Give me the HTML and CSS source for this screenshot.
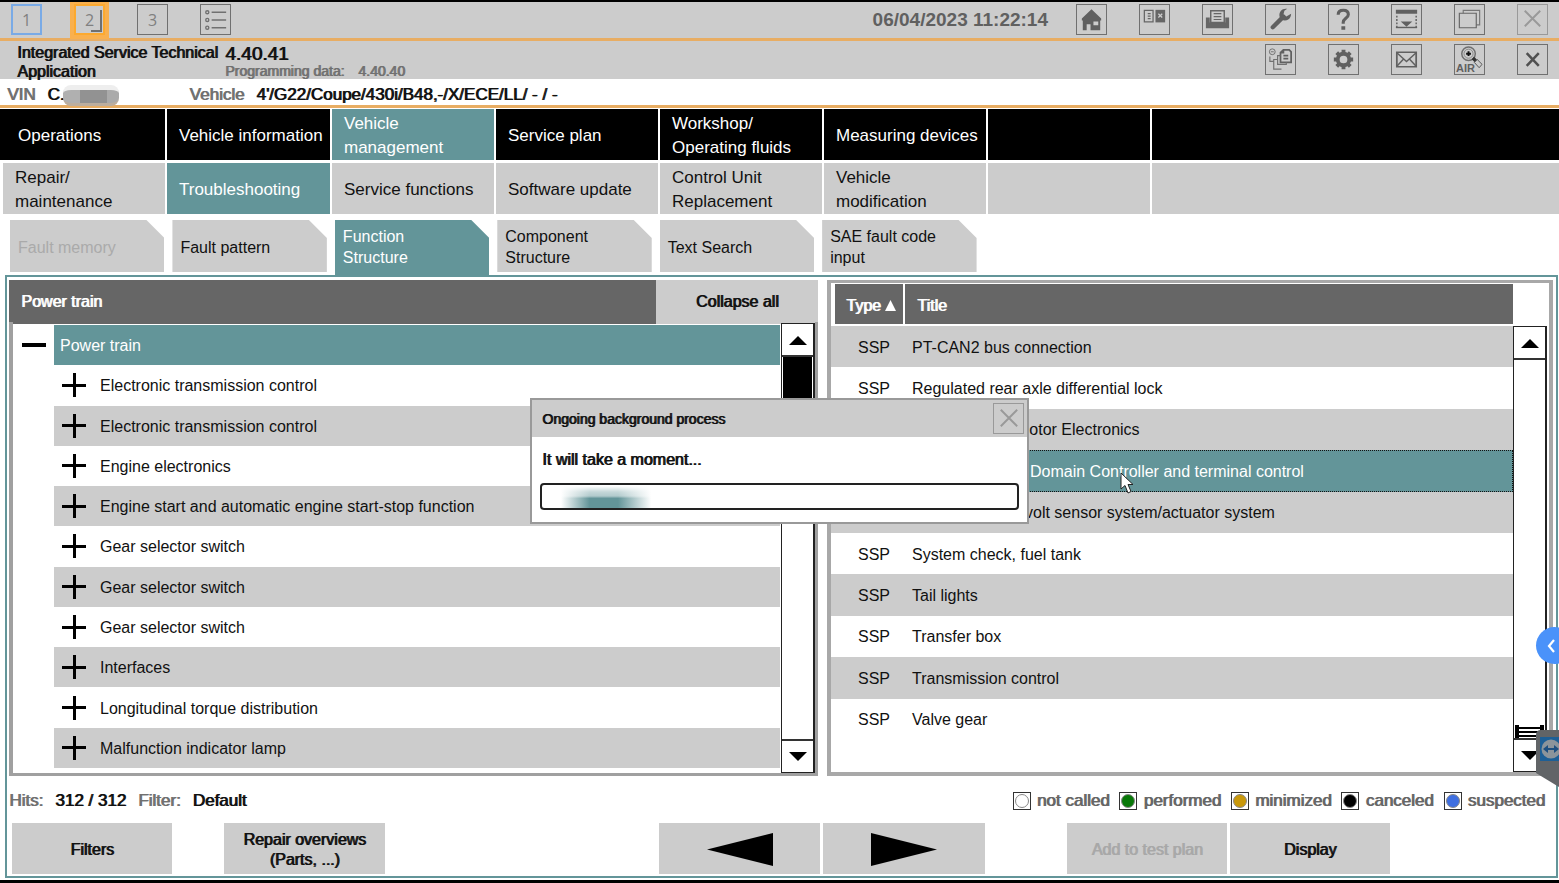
FILE: index.html
```html
<!DOCTYPE html>
<html lang="en">
<head>
<meta charset="utf-8">
<title>Integrated Service Technical Application</title>
<link rel="stylesheet" href="styles.css">
</head>
<body>
<div class="app">
  <header class="bar bar-top">
    <div class="slots">
      <button class="tool slot-blue" type="button">1</button>
      <button class="tool slot-active" type="button">2</button>
      <button class="tool" type="button">3</button>
      <button class="tool" type="button" aria-label="List"><svg viewBox="0 0 30 30" fill="none" stroke="#707070" stroke-width="1.4"><circle cx="6.500" cy="7.500" r="1.600"/><circle cx="6.500" cy="15.500" r="1.600"/><circle cx="6.500" cy="23.500" r="1.600"/><path d="M11 7.500h15M11 15.500h15M11 23.500h15"/></svg></button>
    </div>
    <div class="tools">
      <time class="clock" datetime="2023-04-06T11:22:14">06/04/2023 11:22:14</time>
      <button class="tool" type="button" aria-label="Home"><svg viewBox="0 0 30 30"><path fill="#606060" fill-rule="evenodd" d="M15 4.500 25 14v2h-1v10H14v-6h-4v6H6V16H5v-2zM17 17h5v4h-5z"/></svg></button>
      <button class="tool" type="button" aria-label="Split view"><svg viewBox="0 0 30 30"><path fill="none" stroke="#666" stroke-width="1.300" d="M4.500 5.500h9v12h-9zM8 9h3M8 11.500h3M8 14h3"/><path fill="#666" d="M16 5h10v13H16z"/><path stroke="#ccc" stroke-width="1.300" d="m19 9 4 4m0-4-4 4"/></svg></button>
      <button class="tool" type="button" aria-label="Print"><svg viewBox="0 0 30 30"><path fill="#666" d="M3 13h4v5h16v-5h4v11H3z"/><path fill="#ccc" stroke="#666" stroke-width="1.500" d="M8 18V6h14v12z"/><path stroke="#666" stroke-width="1.200" d="M11 9h8M11 12h8M11 15h8"/></svg></button>
      <button class="tool" type="button" aria-label="Service tools"><svg viewBox="0 0 30 30"><path stroke="#606060" stroke-width="4.500" stroke-linecap="round" d="M7 23 18 12"/><path fill="#606060" d="M22 4c-5-1-9 3-8 8 1 4 6 5 9 3 2-1 3-4 3-6l-5 3-3-2 1-4z"/></svg></button>
      <button class="tool" type="button" aria-label="Help"><svg viewBox="0 0 30 30"><path fill="none" stroke="#606060" stroke-width="3.200" d="M9.500 10c0-3 2-4.600 5.300-4.600 3.200 0 5.200 1.600 5.200 4.300 0 4-5.300 4-5.300 8.300v1.500"/><path fill="#606060" d="M12.800 22h4v3.500h-4z"/></svg></button>
      <button class="tool" type="button" aria-label="Minimize"><svg viewBox="0 0 30 30"><path fill="#606060" d="M4 5h22v4H4zM9 17h12l-6 5.500z"/><path fill="none" stroke="#606060" stroke-width="1.500" stroke-dasharray="2 1.500" d="M5 11v12M25 11v12"/><path fill="#606060" d="M4 22.500h22V24H4z"/></svg></button>
      <button class="tool" type="button" aria-label="Windows"><svg viewBox="0 0 30 30"><path fill="#ccc" stroke="#777" stroke-width="1.200" d="M8.500 5.500h17v15h-17z"/><path fill="#ccc" stroke="#666" stroke-width="1.200" d="M4.500 8.500h17.500v15H4.500z"/></svg></button>
      <button class="tool faded" type="button" aria-label="Close session" disabled><svg viewBox="0 0 30 30"><path stroke="#999" stroke-width="2" d="m7 6 16 16M23 6 7 22"/></svg></button>
    </div>
  </header>

  <header class="bar bar-app">
    <h1 class="app-name strong">Integrated Service Technical Application</h1>
    <div class="version strong">
      <span class="version-main">4.40.41</span>
      <span class="version-data">Programming data: <span class="version-num">4.40.40</span></span>
    </div>
    <div class="tools">
      <button class="tool" type="button" aria-label="Process list"><svg viewBox="0 0 30 30" fill="none" stroke="#707070"><circle cx="6.500" cy="7" r="3"/><path d="M5 7h3"/><path stroke="#606060" stroke-width="1.800" d="M18 5h6l2 2v11H15V8zM18 5v3h-3M18 11h5M18 14h5"/><path stroke-width="1.200" d="M15 11h-3v9h9v-2M12 15H8v10h8M4 12v5h4"/></svg></button>
      <button class="tool" type="button" aria-label="Settings"><svg viewBox="0 0 30 30"><g stroke="#606060" stroke-width="4"><path d="M15 5v20M5 15h20M8 8l14 14M22 8 8 22"/></g><circle cx="15" cy="15" r="6" fill="#ccc" stroke="#606060" stroke-width="4"/></svg></button>
      <button class="tool" type="button" aria-label="Messages"><svg viewBox="0 0 30 30" fill="none" stroke="#606060" stroke-width="1.800"><path d="M5 7.500h20v15H5z"/><path stroke-width="1.500" d="m5 8 10 9 10-9M5 22l7-7.500M25 22l-7-7.500"/></svg></button>
      <button class="tool tool-air" type="button"><svg viewBox="0 0 30 30" fill="none"><circle cx="14" cy="9" r="7" stroke="#707070" stroke-width="1.500"/><circle cx="14" cy="9" r="4.700" stroke="#888"/><path stroke="#111" stroke-width="2" d="M14 6.500v5M11.500 9h5"/><path stroke="#333" stroke-width="3.500" d="m18.500 13.500 4 4"/><path fill="#ccc" stroke="#555" d="m20 18 3-3 5 5-3 3.500z"/></svg><span>AIR</span></button>
      <button class="tool" type="button" aria-label="Close"><svg viewBox="0 0 30 30"><path stroke="#505050" stroke-width="2.600" d="m9 8.500 12.500 13M21.500 8.500 9 21.500"/></svg></button>
    </div>
  </header>

  <div class="vehicle-line strong">
    <span class="label">VIN</span>
    <span class="vin">C.<span class="redaction"></span></span>
    <span class="label">Vehicle</span>
    <span>4'/G22/Coupe/430i/B48,-/X/ECE/LL/ - / -</span>
  </div>

  <nav class="nav nav-main" aria-label="Main">
    <button type="button">Operations</button>
    <button type="button">Vehicle information</button>
    <button type="button" class="current">Vehicle<br>management</button>
    <button type="button">Service plan</button>
    <button type="button">Workshop/<br>Operating fluids</button>
    <button type="button">Measuring devices</button>
    <span></span><span></span>
  </nav>
  <nav class="nav nav-sub" aria-label="Vehicle management">
    <button type="button">Repair/<br>maintenance</button>
    <button type="button" class="current">Troubleshooting</button>
    <button type="button">Service functions</button>
    <button type="button">Software update</button>
    <button type="button">Control Unit<br>Replacement</button>
    <button type="button">Vehicle<br>modification</button>
    <span></span><span></span>
  </nav>
  <nav class="tabs" aria-label="Troubleshooting">
    <button type="button" disabled>Fault memory</button>
    <button type="button">Fault pattern</button>
    <button type="button" class="current">Function<br>Structure</button>
    <button type="button">Component<br>Structure</button>
    <button type="button">Text Search</button>
    <button type="button">SAE fault code<br>input</button>
  </nav>

  <main class="frame">
    <div class="panels">
      <section class="panel-tree">
        <div class="tree-head strong">
          <h2>Power train</h2>
          <button type="button">Collapse all</button>
        </div>
        <div class="tree-body">
          <ul class="tree">
            <li class="root"><button type="button" class="twist minus" aria-label="Collapse"></button><span>Power train</span></li>
            <li><button type="button" class="twist" aria-label="Expand"></button><span>Electronic transmission control</span></li>
            <li><button type="button" class="twist" aria-label="Expand"></button><span>Electronic transmission control</span></li>
            <li><button type="button" class="twist" aria-label="Expand"></button><span>Engine electronics</span></li>
            <li><button type="button" class="twist" aria-label="Expand"></button><span>Engine start and automatic engine start-stop function</span></li>
            <li><button type="button" class="twist" aria-label="Expand"></button><span>Gear selector switch</span></li>
            <li><button type="button" class="twist" aria-label="Expand"></button><span>Gear selector switch</span></li>
            <li><button type="button" class="twist" aria-label="Expand"></button><span>Gear selector switch</span></li>
            <li><button type="button" class="twist" aria-label="Expand"></button><span>Interfaces</span></li>
            <li><button type="button" class="twist" aria-label="Expand"></button><span>Longitudinal torque distribution</span></li>
            <li><button type="button" class="twist" aria-label="Expand"></button><span>Malfunction indicator lamp</span></li>
          </ul>
          <div class="scroll">
            <button type="button" aria-label="Scroll up"><svg viewBox="0 0 18 10"><path d="M0 10 9 1l9 9z"/></svg></button>
            <div class="track"><div class="thumb"></div></div>
            <button type="button" aria-label="Scroll down"><svg viewBox="0 0 18 10"><path d="M0 0h18L9 9z"/></svg></button>
          </div>
        </div>
      </section>

      <section class="panel-docs">
        <div class="docs">
          <table>
            <thead><tr class="strong"><th class="col-type" scope="col">Type <svg viewBox="0 0 10 10"><path d="M0 10 5 0l5 10z"/></svg></th><th scope="col">Title</th></tr></thead>
            <tbody>
              <tr><td>SSP</td><td>PT-CAN2 bus connection</td></tr>
              <tr><td>SSP</td><td>Regulated rear axle differential lock</td></tr>
              <tr><td>SSP</td><td class="in-motor">Motor Electronics</td></tr>
              <tr class="selected"><td>SSP</td><td class="in-domain">Domain Controller and terminal control</td></tr>
              <tr><td>SSP</td><td class="in-volt">volt sensor system/actuator system</td></tr>
              <tr><td>SSP</td><td>System check, fuel tank</td></tr>
              <tr><td>SSP</td><td>Tail lights</td></tr>
              <tr><td>SSP</td><td>Transfer box</td></tr>
              <tr><td>SSP</td><td>Transmission control</td></tr>
              <tr><td>SSP</td><td>Valve gear</td></tr>
            </tbody>
          </table>
        </div>
        <div class="scroll">
          <button type="button" aria-label="Scroll up"><svg viewBox="0 0 18 10"><path d="M0 10 9 1l9 9z"/></svg></button>
          <div class="track track-end"><div class="grip"></div></div>
          <button type="button" aria-label="Scroll down"><svg viewBox="0 0 18 10"><path d="M0 0h18L9 9z"/></svg></button>
        </div>
      </section>
    </div>

    <div class="status strong">
      <span class="label">Hits:</span><span>312 / 312</span>
      <span class="label">Filter:</span><span>Default</span>
      <ul class="legend">
        <li><i class="dot dot-open"></i>not called</li>
        <li><i class="dot dot-green"></i>performed</li>
        <li><i class="dot dot-amber"></i>minimized</li>
        <li><i class="dot dot-black"></i>canceled</li>
        <li><i class="dot dot-blue"></i>suspected</li>
      </ul>
    </div>

    <div class="actions strong">
      <button type="button" class="a-filters">Filters</button>
      <button type="button" class="a-repair">Repair overviews<br>(Parts, ...)</button>
      <button type="button" class="a-prev" aria-label="Previous"><svg viewBox="0 0 66 33"><path d="M66 0v33L0 16.500z"/></svg></button>
      <button type="button" class="a-next" aria-label="Next"><svg viewBox="0 0 66 33"><path d="M0 0v33l66-16.500z"/></svg></button>
      <button type="button" class="a-add" disabled>Add to test plan</button>
      <button type="button" class="a-display">Display</button>
    </div>
  </main>

  <section class="dialog" role="dialog" aria-labelledby="dlg-title">
    <div class="dialog-head">
      <h2 id="dlg-title" class="strong">Ongoing background process</h2>
      <button class="tool faded" type="button" aria-label="Close dialog" disabled><svg viewBox="0 0 30 30"><path stroke="#999" stroke-width="2" d="m7 6 17 17M24 6 7 23"/></svg></button>
    </div>
    <div class="dialog-body">
      <label for="dlg-progress" class="strong">It will take a moment...</label>
      <progress id="dlg-progress"></progress>
    </div>
  </section>

  <svg class="pointer" viewBox="0 0 14 22"><path d="M1 1v16l4-3.500 3 7.500 3-1.500-3-7h5z" fill="#fff" stroke="#222"/></svg>
  <button class="bubble" type="button" aria-label="Open side panel"><svg viewBox="0 0 8 14" fill="none" stroke="#fff" stroke-width="2.200"><path d="M7 1 2 7l5 6"/></svg></button>
  <svg class="remote" viewBox="0 0 23 57"><path fill="#616467" d="M0 5q0-5 5-5h18v57L0 43z"/><path fill="#1d5f96" d="M4 7h19v24H4z"/><circle cx="15" cy="19" r="9.500" fill="#8b949b"/><path fill="#1d4f80" d="m7 19 5-4v3h6v-3l5 4-5 4v-3h-6v3z"/></svg>
</div>
</body>
</html>
```
FILE: styles.css
```css
:root {
  --grey: #ccc;
  --teal: #639599;
  --dark: #666;
  --orange: #e8ad63;
}

* { box-sizing: border-box; }

body {
  margin: 0;
  background: #fff;
  color: #111;
  font: 16px/20px "Liberation Sans", Arial, sans-serif;
}

button {
  margin: 0;
  padding: 0;
  border: 0;
  border-radius: 0;
  color: inherit;
  font: inherit;
  text-shadow: inherit;
}

h1, h2, ul { margin: 0; padding: 0; }
h1, h2, th { font-weight: normal; font-size: 16px; }
ul { list-style: none; }

/* Emphasis drawn as a doubled stroke over the regular face */
.strong { text-shadow: 1px 0 currentColor; }

.app {
  position: relative;
  display: flex;
  flex-direction: column;
  min-height: 100vh;
  border-top: 2px solid #000;
  border-bottom: 3px solid #000;
  overflow: hidden;
}

/* Title bars */
.bar {
  display: flex;
  background: var(--grey);
  padding-right: 11px;
}
.bar-top {
  justify-content: space-between;
  height: 39px;
  padding-left: 11px;
  border-bottom: 3px solid var(--orange);
}
.bar-app { height: 38px; padding-left: 17px; }
.slots, .tools { display: flex; gap: 32px; padding-top: 2px; }
.bar-app .tools { margin-left: auto; padding-top: 3px; }

.tool {
  position: relative;
  display: block;
  flex: none;
  width: 31px;
  height: 31px;
  border: 1px solid #707070;
  background: var(--grey);
  color: #808080;
  font-size: 16px;
  font-family: "Open Sans", sans-serif;
}
.tool svg { display: block; width: 29px; height: 29px; }
.faded { border-color: #999; }
.slot-blue { border: 2px solid #79aae6; }
.slot-active {
  border: 2px solid #fca92f;
  outline: 4px solid #f9b04e;
}
.slot-active::after {
  content: "";
  position: absolute;
  right: 1px;
  bottom: 1px;
  width: 9px;
  height: 20px;
  border: solid #707070;
  border-width: 0 2px 2px 0;
}
.tool-air span {
  position: absolute;
  left: 1px;
  bottom: 0;
  color: #606060;
  font: bold 11px/12px "Liberation Sans", Arial, sans-serif;
}

.clock {
  margin-right: -4px;
  padding-top: 6px;
  color: #606060;
  font-weight: bold;
  font-size: 19px;
}

.app-name {
  width: 208px;
  padding-top: 2px;
  line-height: 19px;
}
.version { display: flex; flex-direction: column; padding-top: 4px; }
.version-main { font-size: 19px; line-height: 18px; }
.version-data { color: #707070; font-size: 14px; line-height: 16px; }
.version-num { margin-left: 10px; }

.vehicle-line {
  display: flex;
  align-items: center;
  gap: 12px;
  height: 29px;
  padding-left: 7px;
  padding-top: 6px;
  border-bottom: 3px solid var(--orange);
  font-size: 17px;
  white-space: pre;
}
.label { color: #707070; }
.vin { display: flex; align-items: center; width: 130px; }
.redaction {
  width: 56px;
  height: 21px;
  margin-left: -1px;
  border-radius: 8px;
  background: linear-gradient(90deg, #b0b0b0 30%, #929292 30% 78%, #aaa 78%);
  border-top: 5px solid #eee;
  border-bottom: 3px solid #bcae9f;
}

/* Navigation rows */
.nav {
  display: grid;
  grid-template-columns: 165fr 163fr repeat(5, 162fr) 407fr;
  gap: 2px;
  height: 51px;
  margin-top: 1px;
  font-size: 17px;
  line-height: 24px;
}
.nav > * {
  min-width: 0;
  padding-top: 2px;
  padding-left: 12px;
  background: var(--grey);
  text-align: left;
  white-space: nowrap;
}
.nav-main { color: #fff; }
.nav-main > * { background: #000; }
.nav-main > :first-child { padding-left: 18px; }
.nav-sub { grid-template-columns: 162fr 163fr repeat(5, 162fr) 407fr; margin: 3px 0 0 3px; }
.nav > .current, .tabs > .current { background: var(--teal); color: #fff; }

.tabs {
  display: grid;
  grid-template-columns: repeat(6, 1fr);
  gap: 8px;
  width: 62%;
  height: 55px;
  margin: 6px 0 0 10px;
  line-height: 21px;
}
.tabs > * {
  margin-bottom: 3px;
  padding: 2px 0 0 8px;
  background: var(--grey);
  text-align: left;
  clip-path: polygon(0 0, calc(100% - 18px) 0, 100% 18px, 100% 100%, 0 100%);
}
.tabs > .current { margin-bottom: 0; padding-bottom: 3px; }
.tabs > :disabled { color: #aaa; }

/* Work area */
.frame {
  flex: 1;
  display: flex;
  flex-direction: column;
  margin: 0 1px 2px 5px;
  padding: 3px 3px 2px 2px;
  border: 2px solid var(--teal);
}
.panels {
  flex: 1;
  display: grid;
  grid-template-columns: 809fr 726fr;
  gap: 9px;
}
.panel-tree, .panel-docs { min-width: 0; }

.panel-tree { display: flex; flex-direction: column; }
.tree-head {
  display: grid;
  grid-template-columns: 4fr 1fr;
  height: 42px;
  border-bottom: 1px solid #bbb;
}
.tree-head h2 {
  padding: 12px;
  background: var(--dark);
  color: #fff;
}
.tree-head button { background: var(--grey); }
.tree-body {
  flex: 1;
  display: flex;
  gap: 1px;
  padding-top: 1px;
  border: solid #a0a0a0;
  border-width: 0 3px 3px 4px;
}
.tree {
  flex: 1;
  display: grid;
  grid-auto-rows: 1fr;
  padding: 2px 0 5px 41px;
}
.tree li { display: flex; align-items: center; gap: 14px; padding-left: 8px; }
.tree span { padding-top: 2px; }
.tree li:nth-child(odd) { background: var(--grey); }
.tree .root:first-child { padding-left: 6px; background: var(--teal); color: #fff; }
.tree .root .twist { margin-left: -38px; }

.twist {
  flex: none;
  width: 24px;
  height: 24px;
  background:
    linear-gradient(#000, #000) center / 24px 3px no-repeat,
    linear-gradient(#000, #000) center / 3px 24px no-repeat;
}
.twist.minus { background: linear-gradient(#000, #000) center / 24px 4px no-repeat; }

.scroll {
  flex: none;
  display: flex;
  flex-direction: column;
  width: 34px;
  border: 1px solid #222;
  border-width: 1px 2px 1px 1px;
  background: #fff;
}
.scroll button { display: grid; place-items: center; height: 33px; background: #fff; }
.scroll button:first-child { border-bottom: 2px solid #333; }
.scroll button:last-child { border-top: 2px solid #333; }
.scroll svg { width: 18px; height: 10px; }
.track { flex: 1; display: flex; flex-direction: column; padding: 0 1px; }
.thumb { height: 20%; background: #000; }
.track-end { justify-content: flex-end; }
.grip {
  height: 13px;
  border: solid #000;
  border-width: 0 4px;
  background: repeating-linear-gradient(#fff 0 2px, #000 2px 4px);
}

.panel-docs {
  display: flex;
  border: 4px solid #a8a8a8;
  border-top-width: 3px;
}
.panel-docs .scroll { margin-top: 43px; margin-right: 2px; }
.docs { flex: 1; display: flex; padding-bottom: 32px; }
.docs table { width: 100%; border-spacing: 0; }
.docs th {
  height: 43px;
  padding: 4px 0 0 12px;
  border: solid #fff;
  border-width: 1px 0 2px 2px;
  background: var(--dark);
  color: #fff;
  text-align: left;
}
.docs th svg { width: 11px; height: 11px; fill: #fff; }
.docs th.col-type { width: 72px; padding-left: 11px; border-left-width: 4px; }
.docs td { padding: 2px 0 0 9px; white-space: nowrap; }
.docs td:first-child { padding-left: 27px; }
.docs tbody tr:nth-child(odd) { background: var(--grey); }
.docs tbody .selected { background: var(--teal); color: #fff; outline: 1px dotted #111; outline-offset: -1px; }
.docs td.in-motor { padding-left: 113px; }
.docs td.in-domain { padding-left: 127px; }
.docs td.in-volt { padding-left: 122px; }

/* Status and actions */
.status {
  display: flex;
  align-items: center;
  gap: 12px;
  height: 47px;
  padding: 3px 8px 0 0;
  font-size: 17px;
}
.legend { display: flex; gap: 10px; margin-left: auto; color: #666; }
.legend li { display: flex; align-items: center; gap: 6px; }
.dot {
  display: grid;
  place-items: center;
  width: 18px;
  height: 18px;
  border: 1px solid #333;
}
.dot::before { content: ""; width: 12px; height: 12px; border-radius: 50%; border: 1px solid #888; }
.dot-green::before { background: #087808; }
.dot-amber::before { background: #c9980a; }
.dot-black::before { background: #000; }
.dot-blue::before { background: #3f6fe0; }

.actions {
  display: grid;
  grid-template-columns: 3fr 160fr 52fr 161fr 274fr 161fr 3fr 162fr 82fr 160fr 3fr 160fr 163fr;
  height: 51px;
}
.actions button { min-width: 0; padding-top: 2px; background: var(--grey); white-space: nowrap; }
.actions svg { display: block; width: 66px; height: 33px; margin: 0 auto; }
.actions :disabled { color: #a8a8a8; }
.a-filters { grid-column: 2; }
.a-repair { grid-column: 4; }
.a-prev { grid-column: 6; }
.a-next { grid-column: 8; }
.a-add { grid-column: 10; }
.a-display { grid-column: 12; }

/* Floating layers */
.dialog {
  position: absolute;
  top: 396px;
  left: 34%;
  width: 499px;
  border: 2px solid #999;
  background: #fff;
}
.dialog-head {
  display: flex;
  align-items: center;
  justify-content: space-between;
  height: 37px;
  padding: 0 3px 0 10px;
  background: var(--grey);
}
.dialog h2 { font-size: 14px; }
.dialog-body {
  display: flex;
  flex-direction: column;
  gap: 13px;
  padding: 13px 8px 12px;
}
.dialog-body label { padding-left: 2px; }
.dialog progress {
  appearance: none;
  width: 100%;
  height: 27px;
  border: 2px solid #222;
  border-radius: 4px;
  background:
    linear-gradient(#fff 5%, #ffffffa0 30%, #ffffff80 48%, #fff0 58%),
    linear-gradient(90deg, #fff 4%, #639599 10% 16%, #fff 23%);
}
.dialog progress::-webkit-progress-bar { background: transparent; }
.dialog progress::-webkit-progress-value { background: transparent; }

.pointer { position: absolute; left: 1120px; top: 470px; width: 14px; height: 22px; }
.bubble {
  position: absolute;
  right: -14px;
  top: 625px;
  width: 37px;
  height: 37px;
  border-radius: 50%;
  background: #4a92fa;
}
.bubble svg { display: block; width: 8px; height: 14px; margin-left: 11px; }
.remote { position: absolute; right: 0; top: 728px; width: 23px; height: 57px; }
```
